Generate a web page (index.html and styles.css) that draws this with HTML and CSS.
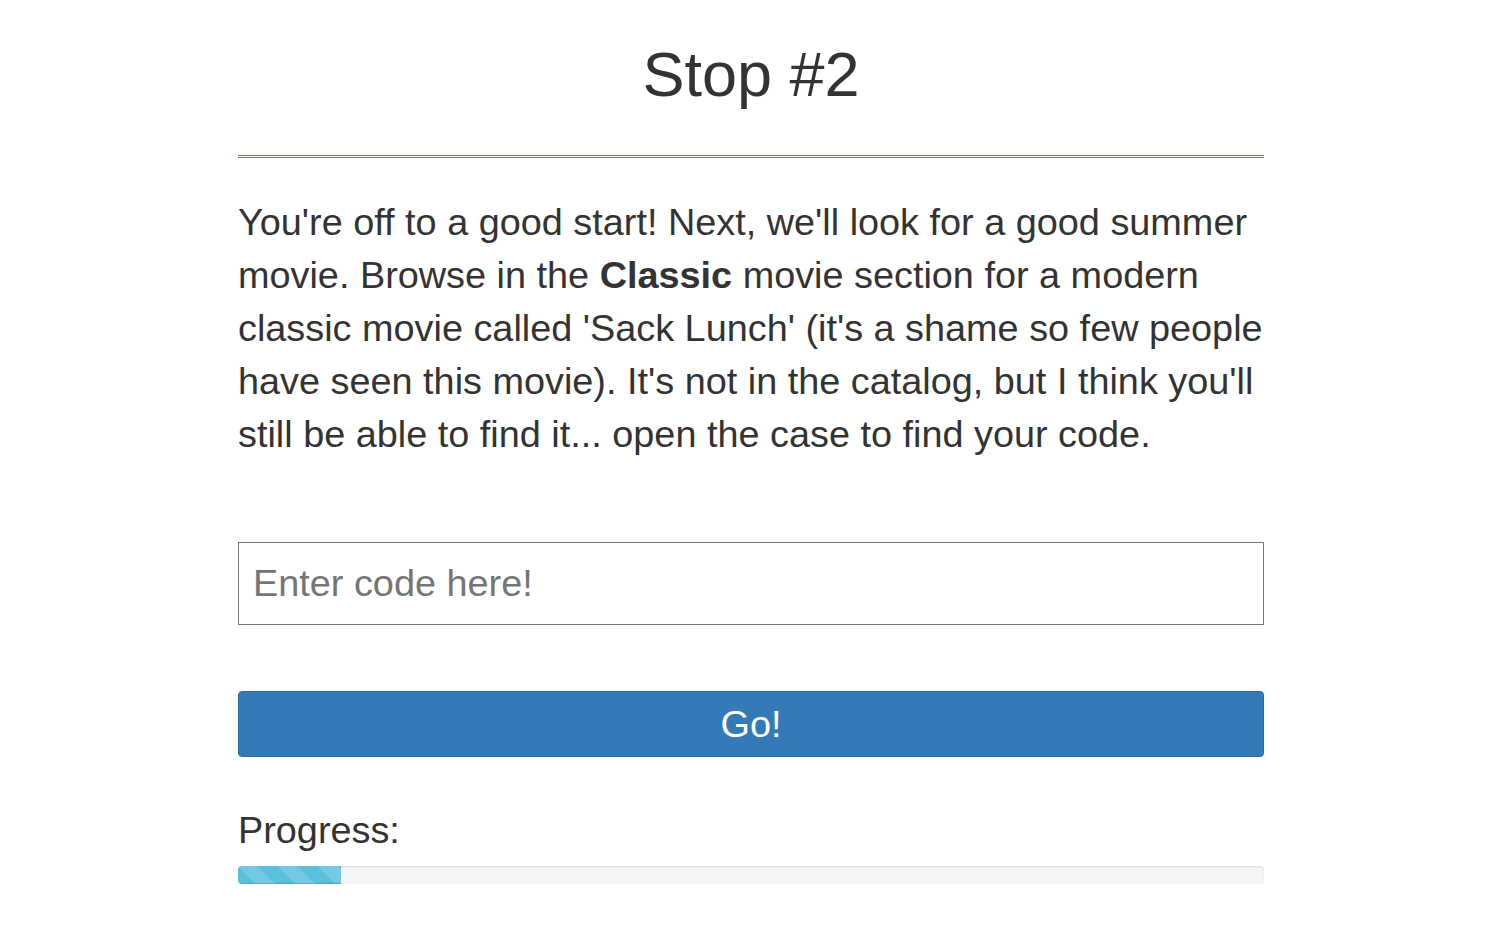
FILE: index.html
```html
<!DOCTYPE html>
<html>
<head>
<meta charset="utf-8">
<link rel="stylesheet" href="styles.css">
<title>Stop #2</title>
</head>
<body>
<div class="page">
  <h1 class="title">Stop #2</h1>
  <hr class="rule">
  <p class="clue">You're off to a good start! Next, we'll look for a good summer movie. Browse in the <strong>Classic</strong> movie section for a modern classic movie called 'Sack Lunch' (it's a shame so few people have seen this movie). It's not in the catalog, but I think you'll still be able to find it... open the case to find your code.</p>
  <form class="code-form">
    <input class="code-input" type="text" placeholder="Enter code here!">
    <button class="go-btn" type="button">Go!</button>
  </form>
  <div class="progress-label">Progress:</div>
  <div class="progress">
    <div class="progress-bar" style="width: 10%"></div>
  </div>
</div>
</body>
</html>
```

FILE: styles.css
```css
html, body {
  margin: 0;
  padding: 0;
  background: #fff;
}
body {
  font-family: "Liberation Sans", Arial, sans-serif;
  color: #333;
}
.page {
  width: 1026px;
  margin-left: calc(50% - 512px);
  padding-top: 34px;
}
.title {
  margin: 0;
  font-size: 63px;
  font-weight: 400;
  line-height: 80px;
  text-align: center;
}
.rule {
  margin: 41px 0 0 0;
  height: 0;
  border: 0;
  border-top: 3px double #4a7fb6;
}
.clue {
  margin: 38px 0 0 0;
  font-size: 37.85px;
  line-height: 53px;
}
.clue strong {
  font-weight: 700;
}
.code-form {
  display: flex;
  flex-direction: column;
  gap: 66px;
  margin-top: 81px;
}
.code-input {
  box-sizing: border-box;
  width: 100%;
  height: 83px;
  margin: 0;
  padding: 0 14px;
  border: 1px solid #767676;
  border-radius: 0;
  font-family: "Liberation Sans", Arial, sans-serif;
  font-size: 37.85px;
  color: #333;
  background: #fff;
  outline: none;
}
.code-input::placeholder {
  color: #757575;
}
.go-btn {
  box-sizing: border-box;
  width: 100%;
  height: 66px;
  margin: 0;
  padding: 0;
  border: 1px solid #2e6da4;
  border-radius: 4px;
  background: #337ab7;
  color: #fff;
  font-family: "Liberation Sans", Arial, sans-serif;
  font-size: 37.85px;
  cursor: pointer;
}
.progress-label {
  margin-top: 47px;
  font-size: 37.85px;
  line-height: 53px;
}
.progress {
  margin-top: 9px;
  height: 18px;
  background: #f5f5f5;
  border-radius: 4px;
  box-shadow: inset 0 1px 2px rgba(0,0,0,.1);
  overflow: hidden;
}
.progress-bar {
  height: 100%;
  background-color: #5bc0de;
  background-image: linear-gradient(45deg, rgba(255,255,255,.15) 25%, transparent 25%, transparent 50%, rgba(255,255,255,.15) 50%, rgba(255,255,255,.15) 75%, transparent 75%, transparent);
  background-size: 40px 40px;
  box-shadow: inset 0 -1px 0 rgba(0,0,0,.15);
}
```
